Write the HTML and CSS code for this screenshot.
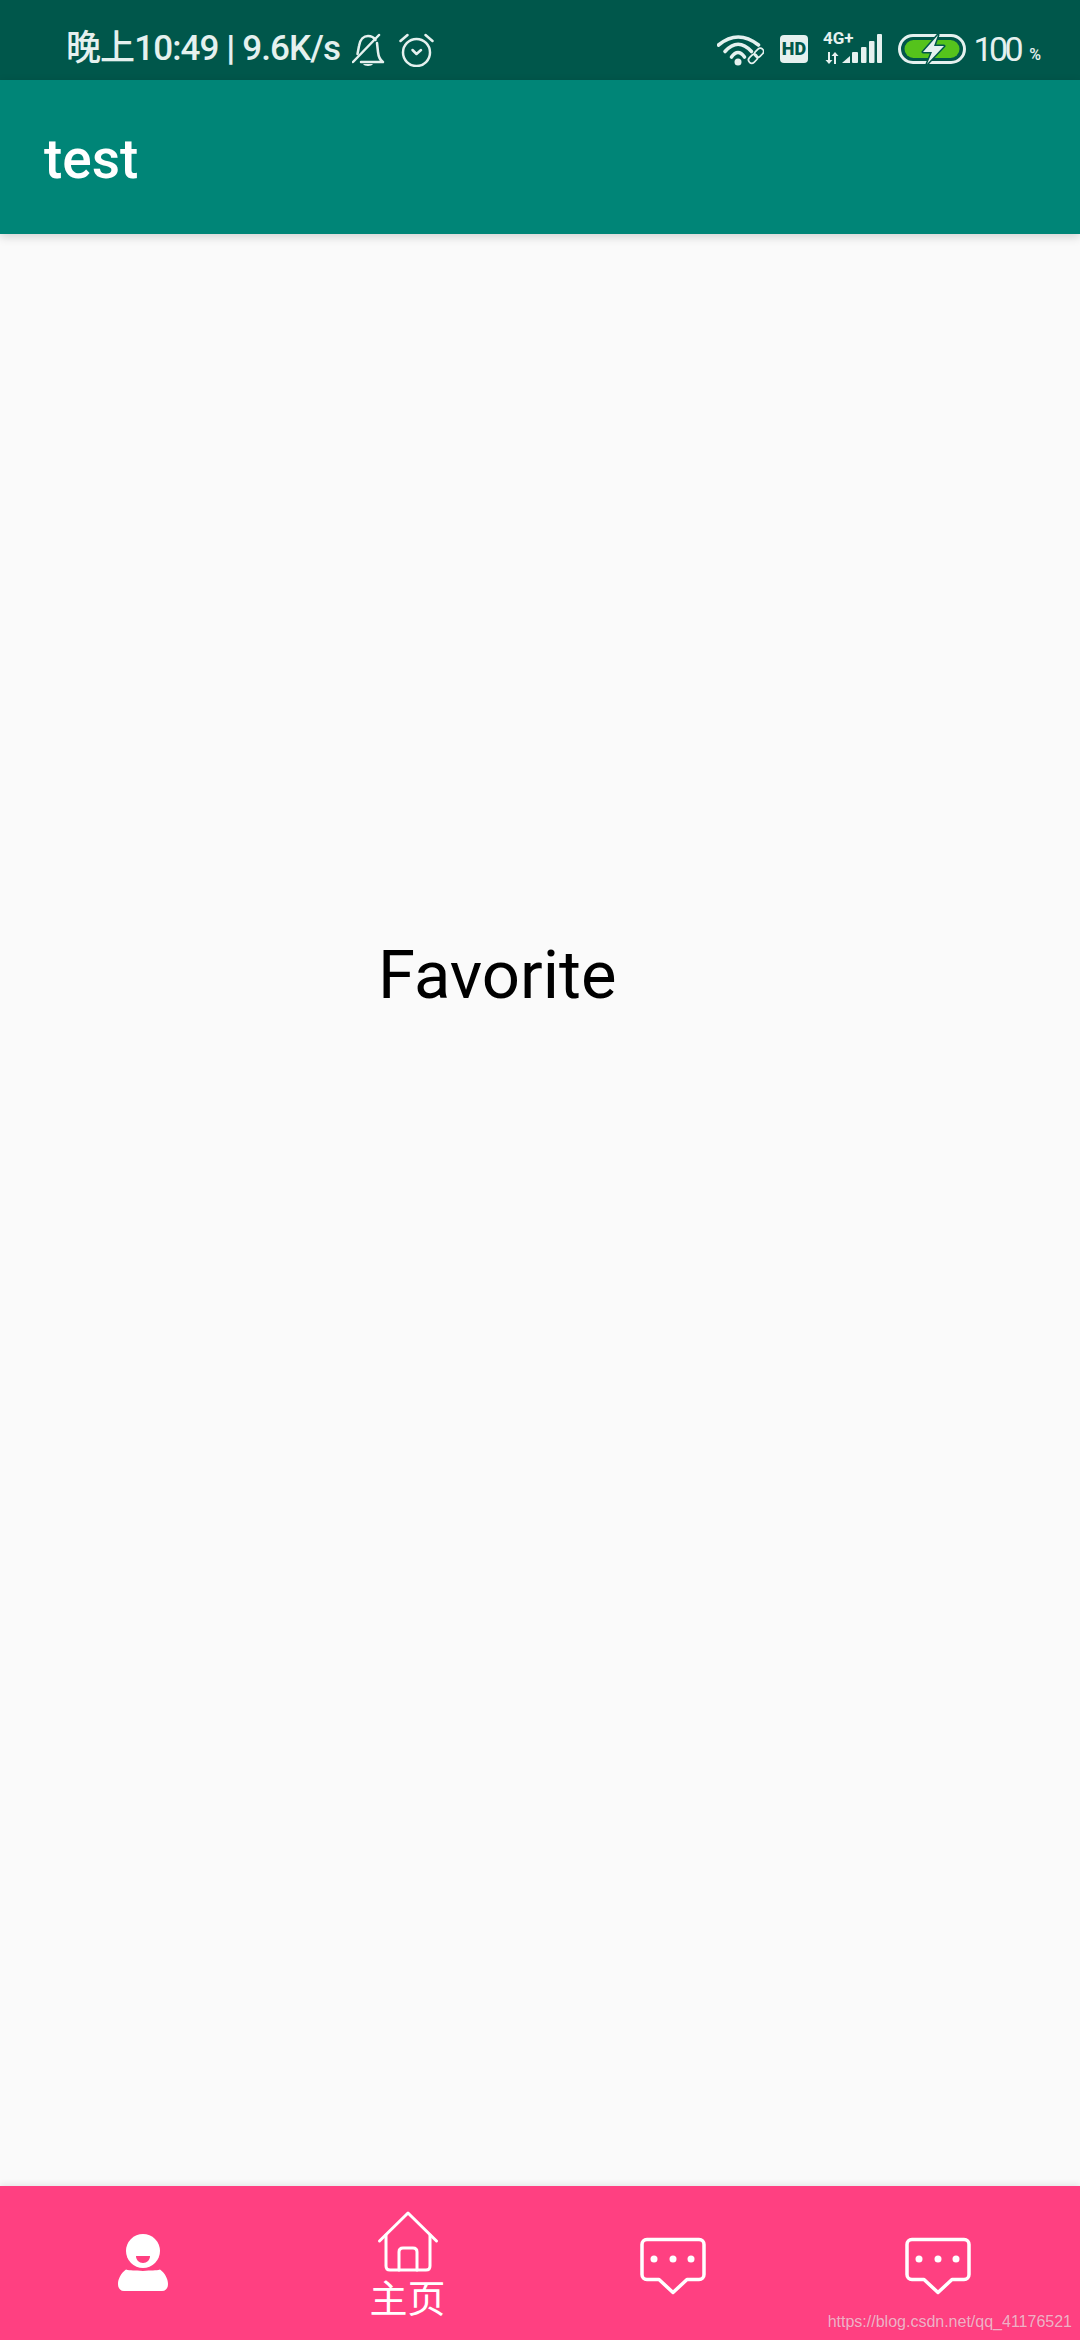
FILE: index.html
```html
<!DOCTYPE html>
<html lang="zh">
<head>
<meta charset="utf-8">
<title>test</title>
<link rel="stylesheet" href="styles.css">
</head>
<body>
<div class="app">
  <header class="status">
    <div class="status-left">
      <span class="clock">晚上10:49 <b class="sep">|</b> 9.6K/s</span>
      <svg class="ic-bell" width="33" height="34" viewBox="0 0 33 34">
        <g class="line-25">
          <path d="M27 2 L1 29"/>
          <path d="M5.500 21 L7 13 C8 6 12 3 16 3 C19 3 22 4.500 23.500 7"/>
          <path d="M25 10 L26 19 C26.500 24 28 27 31 29 H9"/>
        </g>
        <path class="fill-ink" d="M11 31 H21 C20 33.500 12 33.500 11 31 Z"/>
      </svg>
      <svg class="ic-alarm" width="35" height="34" viewBox="0 0 35 34">
        <g class="line-25">
          <circle cx="17.500" cy="19.500" r="13.500"/>
          <path d="M1.500 8 L8.500 2"/>
          <path d="M26.500 2 L33.500 8"/>
          <path d="M13.500 17 L17.500 21 L22 17"/>
        </g>
      </svg>
    </div>
    <div class="status-right">
      <svg class="ic-wifi" width="47" height="32" viewBox="0 0 47 32">
        <g class="line-3">
          <path d="M1.500 11 Q21 -5 41.500 11"/>
          <path d="M8 17.500 Q21 3 34.500 17.500"/>
          <path d="M14.500 23 Q21 14 27.500 23"/>
        </g>
        <circle class="fill-ink" cx="21" cy="28" r="3.500"/>
        <g class="line-16">
          <rect x="31" y="21.500" width="10" height="6.500" rx="3.200" transform="rotate(-45 36 24.700)"/>
          <rect x="37" y="15.500" width="10" height="6.500" rx="3.200" transform="rotate(-45 42 18.700)"/>
        </g>
      </svg>
      <svg class="ic-hd" width="28" height="28" viewBox="0 0 28 28">
        <rect class="fill-ink" width="28" height="28" rx="4"/>
        <text class="hd-text" x="14" y="20">HD</text>
      </svg>
      <svg class="ic-net" width="59" height="35" viewBox="0 -3 59 35">
        <text class="net-text" x="0" y="11.500">4G+</text>
        <path class="fill-ink" d="M5 20 H7 V28 H9.500 L6 32 L2.500 28 H5 Z"/>
        <path class="fill-ink" d="M11 32 H13 V24 H15.500 L12 20 L8.500 24 H11 Z"/>
        <path class="fill-ink" d="M19 31 L27 24 V31 Z"/>
        <rect class="fill-ink" x="29" y="20" width="6" height="11" rx="1"/>
        <rect class="fill-ink" x="38" y="15" width="5.500" height="16" rx="1"/>
        <rect class="fill-ink" x="46" y="9" width="5.500" height="22" rx="1"/>
        <rect class="fill-ink" x="54" y="2" width="5" height="29" rx="1"/>
      </svg>
      <svg class="ic-batt" width="68" height="32" viewBox="0 0 68 32">
        <rect class="line-batt" x="1.500" y="2.500" width="65" height="27" rx="13.500"/>
        <rect class="fill-green" x="6.500" y="7" width="55" height="18" rx="9"/>
        <polygon class="bolt" points="40,2 25,19 34,19 29,31 46,13 36,13"/>
      </svg>
      <span class="pct">100</span>
      <span class="pct-sign">%</span>
    </div>
  </header>

  <div class="toolbar">
    <h1 class="title">test</h1>
  </div>

  <main class="content">
    <p class="fav">Favorite</p>
  </main>

  <nav class="nav">
    <div class="nav-item">
      <svg class="nav-icon" width="66" height="66" viewBox="0 0 66 66">
        <circle class="fill-white" cx="33" cy="21" r="17"/>
        <path class="fill-pink" d="M26 26 H40 C40 30 37 33 33 33 C29 33 26 30 26 26 Z"/>
        <path class="fill-white" d="M16 39.500 C20 41 25 40 33 41 C41 40 46 41 50 39.500 C55 43 58 49 58 54 C58 58 56 61 52 61 H14 C10 61 8 58 8 54 C8 49 11 43 16 39.500 Z"/>
      </svg>
    </div>
    <div class="nav-item nav-item-active">
      <svg class="nav-icon" width="66" height="66" viewBox="0 0 66 66">
        <g class="line-w3">
          <path d="M4.500 33 L33 5 L61.500 33"/>
          <path d="M11 27 V58 C11 60.500 12.500 62 15 62 H51 C53.500 62 55 60.500 55 58 V27"/>
          <path d="M24 62 V44 C24 41.500 25.500 40 28 40 H38 C40.500 40 42 41.500 42 44 V62"/>
        </g>
      </svg>
      <span class="nav-label">主页</span>
    </div>
    <div class="nav-item">
      <svg class="nav-icon" width="66" height="66" viewBox="0 0 66 66">
        <path class="line-w35" d="M7 9.500 H59 C62 9.500 64 11.500 64 14.500 V44.500 C64 47.500 62 49.500 59 49.500 H47 L33 62.500 L19 49.500 H7 C4 49.500 2 47.500 2 44.500 V14.500 C2 11.500 4 9.500 7 9.500 Z"/>
        <circle class="fill-white" cx="14" cy="29" r="3.500"/>
        <circle class="fill-white" cx="33" cy="29" r="3.500"/>
        <circle class="fill-white" cx="51" cy="29" r="3.500"/>
      </svg>
    </div>
    <div class="nav-item">
      <svg class="nav-icon" width="66" height="66" viewBox="0 0 66 66">
        <path class="line-w35" d="M7 9.500 H59 C62 9.500 64 11.500 64 14.500 V44.500 C64 47.500 62 49.500 59 49.500 H47 L33 62.500 L19 49.500 H7 C4 49.500 2 47.500 2 44.500 V14.500 C2 11.500 4 9.500 7 9.500 Z"/>
        <circle class="fill-white" cx="14" cy="29" r="3.500"/>
        <circle class="fill-white" cx="33" cy="29" r="3.500"/>
        <circle class="fill-white" cx="51" cy="29" r="3.500"/>
      </svg>
    </div>
    <span class="watermark">https://blog.csdn.net/qq_41176521</span>
  </nav>
</div>
</body>
</html>
```
FILE: styles.css
```css
* { box-sizing: border-box; }
html, body { margin: 0; padding: 0; }
body { font-family: Roboto, "Noto Sans CJK SC", sans-serif; background: #fafafa; }

.app { width: 1080px; height: 2340px; display: flex; flex-direction: column; overflow: hidden; }

.status {
  height: 80px; flex: none; background: #00574b; color: #e5f1ef;
  display: flex; justify-content: space-between; align-items: center;
  padding: 18px 39px 0 66px;
}
.status-left, .status-right { display: flex; align-items: center; }
.clock { font-size: 35px; font-weight: 500; line-height: 40px; white-space: nowrap; letter-spacing: -0.9px; color: #e5f1ef; }
.sep { font-weight: 900; }
.ic-bell { margin-left: 12px; margin-top: 2px; }
.ic-alarm { margin-left: 14px; margin-top: 2px; }
.ic-wifi { margin-right: 16px; margin-top: 2px; }
.ic-hd { margin-right: 15px; }
.ic-net { margin-right: 16px; margin-bottom: 5px; }
.ic-batt { margin-right: 7px; }
.pct { font-size: 34px; font-weight: 400; line-height: 40px; letter-spacing: -3.500px; }
.pct-sign { font-size: 16px; font-weight: 500; margin-left: 9px; margin-top: 10px; }

.line-25, .line-25 * { fill: none; stroke: #e5f1ef; stroke-width: 2.5; stroke-linecap: round; stroke-linejoin: round; }
.line-3, .line-3 * { fill: none; stroke: #e5f1ef; stroke-width: 3.6; stroke-linecap: round; }
.line-16, .line-16 * { fill: none; stroke: #e5f1ef; stroke-width: 1.7; }
.line-batt { fill: none; stroke: #e5f1ef; stroke-width: 3; }
.fill-ink { fill: #e5f1ef; }
.fill-green { fill: #55c31c; }
.bolt { fill: #e5f1ef; stroke: #00574b; stroke-width: 3; paint-order: stroke; stroke-linejoin: round; }
.hd-text { font-family: Roboto, sans-serif; font-size: 18px; font-weight: 900; fill: #00574b; text-anchor: middle; }
.net-text { font-family: Roboto, sans-serif; font-size: 17px; font-weight: 700; fill: #e5f1ef; }

.toolbar {
  height: 154px; flex: none; background: #008577; position: relative; z-index: 2;
  box-shadow: 0 3px 9px rgba(0, 0, 0, 0.16);
  display: flex; align-items: center; padding-left: 44px;
}
.title { margin: 4px 0 0; font-size: 55px; font-weight: 500; line-height: 64px; color: #fff; }

.content { flex: 1; background: #fafafa; position: relative; z-index: 1; padding: 702px 0 0 378px; }
.fav { margin: 0; font-size: 67px; line-height: 78px; font-weight: 400; color: #000; }

.nav {
  height: 154px; flex: none; background: #ff4081; position: relative; z-index: 2;
  box-shadow: 0 -2px 6px rgba(0, 0, 0, 0.08);
  display: flex; padding: 0 10px;
}
.nav-item { flex: 1; display: flex; flex-direction: column; align-items: center; justify-content: center; }
.nav-item-active { justify-content: flex-start; padding-top: 22px; }
.nav-icon { display: block; flex: none; }
.nav-label { font-family: "Noto Sans CJK SC", sans-serif; font-weight: 400; font-size: 38px; line-height: 44px; color: #fff; }

.line-w3, .line-w3 * { fill: none; stroke: #fff; stroke-width: 3; stroke-linecap: round; stroke-linejoin: round; }
.line-w35 { fill: none; stroke: #fff; stroke-width: 3.5; stroke-linecap: round; stroke-linejoin: round; }
.fill-white { fill: #fff; }
.fill-pink { fill: #ff4081; }

.watermark {
  position: absolute; right: 8px; bottom: 7px;
  font-family: "Liberation Sans", sans-serif; font-size: 16px; line-height: 22px;
  color: rgba(255, 255, 255, 0.62); text-shadow: 0 0 1px rgba(0, 0, 0, 0.15); white-space: nowrap;
}
```
